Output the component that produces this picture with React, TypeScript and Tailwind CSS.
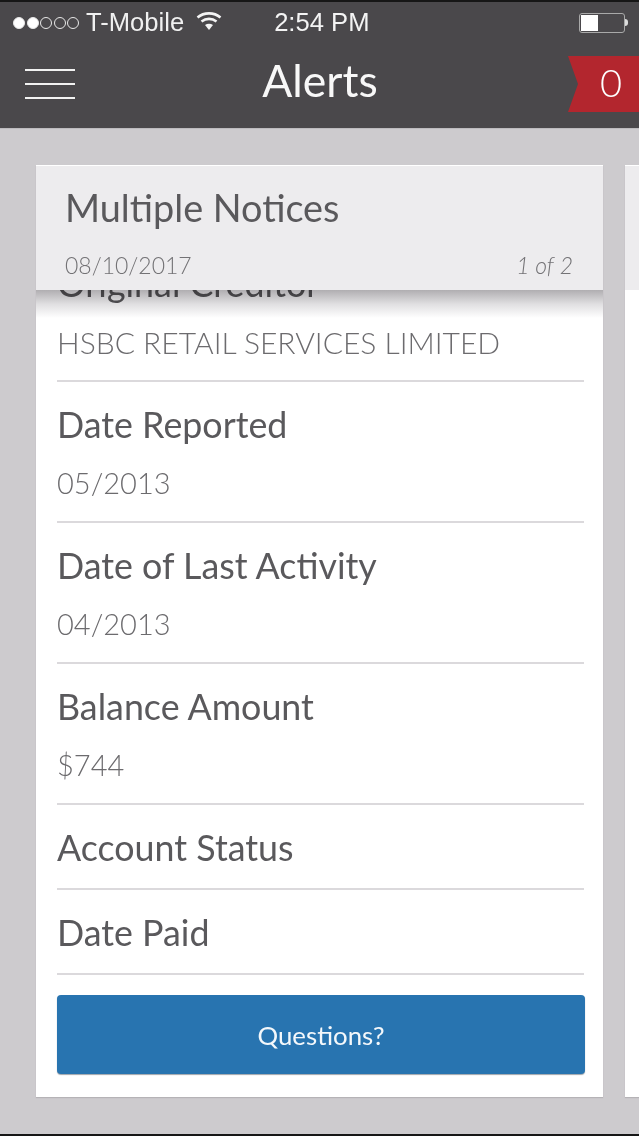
import { ReactNode } from 'react';

const FIELDS: { label: string; value?: string }[] = [
  { label: 'Date Reported', value: '05/2013' },
  { label: 'Date of Last Activity', value: '04/2013' },
  { label: 'Balance Amount', value: '$744' },
  { label: 'Account Status' },
  { label: 'Date Paid' },
];

function SignalDots() {
  return (
    <div className="flex items-center gap-[1.5px]">
      {[0, 1, 2, 3, 4].map((i) => (
        <span
          key={i}
          className={`h-[12px] w-[12px] rounded-full border border-[#e8e8e8] ${i < 2 ? 'bg-white' : ''}`}
        />
      ))}
    </div>
  );
}

function WifiIcon() {
  return (
    <svg width="26" height="20" viewBox="0 0 26 20" fill="none" stroke="#f4f4f4" strokeWidth="2.6">
      <path d="M1.5 6.5C8 1 18 1 24.5 6.5" />
      <path d="M5.5 10.5C10 7 16 7 20.5 10.5" />
      <path d="M13 19l-4-5c2.4-1.8 5.6-1.8 8 0z" fill="#f4f4f4" stroke="none" />
    </svg>
  );
}

function BatteryIcon() {
  return (
    <div className="flex items-center">
      <div className="h-[20px] w-[46px] rounded-[3px] border border-[#a9a9a9] p-[1px]">
        <div className="h-full w-[17px] bg-white" />
      </div>
      <div className="h-[7px] w-[3px] rounded-r-sm bg-[#dddddd]" />
    </div>
  );
}

function Field({ label, value }: { label: string; value?: ReactNode }) {
  return (
    <div className="border-b-2 border-[#dbd9dc]">
      <div className={`pt-[21px] text-[35.8px] leading-[44px] text-[#5a595c] ${value ? '' : 'pb-[18px]'}`}>
        {label}
      </div>
      {value && (
        <div className="pt-[16px] pb-[18px] text-[29px] font-light leading-[40px] text-[#6c6b6e]">{value}</div>
      )}
    </div>
  );
}

export default function App() {
  return (
    <div
      className="flex h-[1136px] w-[639px] flex-col overflow-hidden bg-[#cdcbce]"
      style={{ fontFamily: 'Lato, "Open Sans", sans-serif' }}
    >
      {/* Status bar + nav */}
      <header className="h-[129px] shrink-0 border-t-[2px] border-b border-t-[#161616] border-b-[#bdbbbe] bg-[#4a484b] text-white">
        <div className="relative flex h-[40px] items-center pl-[13px] pt-[1px]" style={{ fontFamily: '"Liberation Sans", sans-serif' }}>
          <SignalDots />
          <span className="ml-[7px] text-[25.6px] leading-none text-[#f0f0f0]">T-Mobile</span>
          <span className="ml-[12px] -mt-[4px]"><WifiIcon /></span>
          <span className="ml-[52px] text-[25.6px] leading-none text-[#f4f4f4]">2:54 PM</span>
          <span className="ml-auto mr-[11px]"><BatteryIcon /></span>
        </div>
        <div className="flex h-[86px] items-center justify-between">
          <div className="ml-[25px] -mt-[3px] flex w-[50px] flex-col gap-[12px]">
            <span className="h-[2px] bg-[#f2f2f2]" />
            <span className="h-[2px] bg-[#f2f2f2]" />
            <span className="h-[2px] bg-[#f2f2f2]" />
          </div>
          <h1 className="-mt-[9px] -ml-[3px] text-[44.5px] font-normal leading-none text-[#f8f8f8]">Alerts</h1>
          <div className="-mt-[2px] flex h-[56px] w-[71px] items-center justify-end bg-[#b3262e] pb-[4px] pr-[17px] text-[38px] font-light leading-none [clip-path:polygon(0_0,100%_0,100%_100%,0_100%,10px_50%)]">
            0
          </div>
        </div>
      </header>

      {/* Cards */}
      <main className="flex min-h-0 flex-1 items-start gap-[22px] pl-[36px] pt-[36px]">
        <section className="relative flex h-[932px] w-[567px] shrink-0 flex-col overflow-hidden bg-white shadow-[0_1px_1px_#b5b3b6]">
          <div className="relative z-10 h-[125px] shrink-0 border-t border-white bg-[#edecee] pl-[29px] pr-[30px]">
            <div className="pt-[18px] text-[37.8px] leading-[48px] text-[#5a595c]">Multiple Notices</div>
            <div className="mt-[17px] flex items-center justify-between text-[23px] font-light leading-[32px] text-[#737275]">
              <span>08/10/2017</span>
              <span className="italic">1 of 2</span>
            </div>
          </div>
          <div className="pointer-events-none absolute inset-x-0 top-[125px] z-20 h-[28px] bg-gradient-to-b from-[#b0aeb1] via-[#e0dfe1] to-white mix-blend-multiply" />

          <div className="-mt-[26px] flex flex-col pl-[21px] pr-[19px]">
            <div className="h-[34px] text-[35.8px] leading-[40px] text-[#5a595c]">Original Creditor</div>
            <div className="border-b-2 border-[#dbd9dc] pt-[24px] pb-[18px] text-[30px] font-light leading-[40px] text-[#6c6b6e]">
              HSBC RETAIL SERVICES LIMITED
            </div>
            {FIELDS.map((f) => (
              <Field key={f.label} label={f.label} value={f.value} />
            ))}
            <button className="mt-[20px] h-[79px] w-[528px] rounded-[4px] bg-[#2874b0] pt-[2px] text-[25.8px] leading-none text-[#f4f8fb] shadow-[0_1px_1px_#9fa5ab]">
              Questions?
            </button>
          </div>
        </section>

        <section className="h-[932px] w-[60px] shrink-0 bg-white shadow-[0_1px_1px_#b5b3b6]">
          <div className="h-[125px] border-t border-white bg-[#edecee]" />
        </section>
      </main>

      <div className="h-[2px] shrink-0 bg-[#161616]" />
    </div>
  );
}
